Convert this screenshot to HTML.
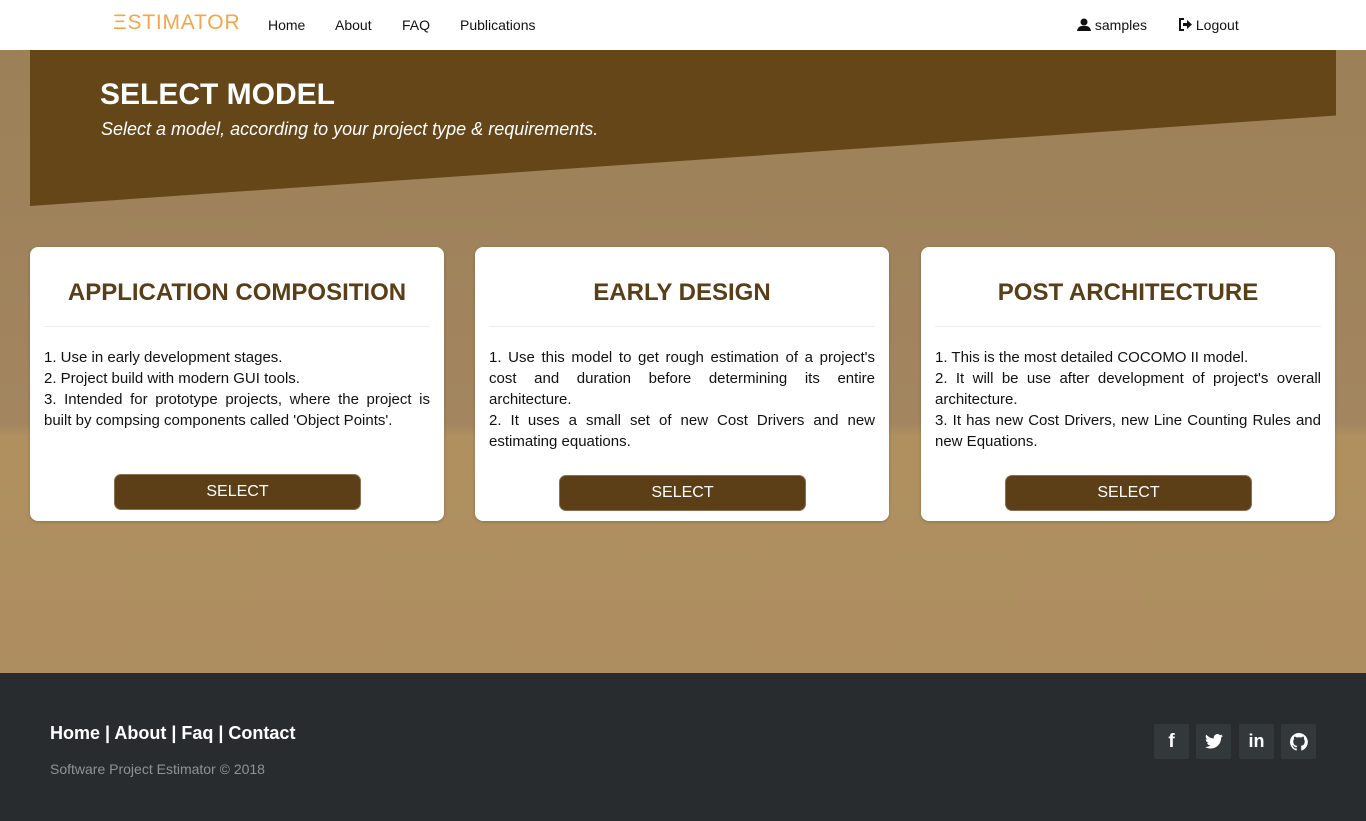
<!DOCTYPE html>
<html><head><meta charset="utf-8"><style>
*{box-sizing:border-box;margin:0;padding:0}
body{width:1366px;height:821px;overflow:hidden;font-family:"Liberation Sans",Arial,sans-serif;position:relative;background:#292c2f}
.nav{position:absolute;top:0;left:0;width:1366px;height:50px;background:#fff;font-size:14px;color:#111}
.nav span{position:absolute;top:17px}
.logo{position:absolute;left:113px;top:11px;font-size:21px;color:#f5a54a;letter-spacing:0.8px;font-weight:300}
.bg{position:absolute;top:50px;left:0;width:1366px;height:623px;background:linear-gradient(180deg,#9c8057 0%,#a38660 60%,#b0905f 62%,#ad8e60 100%)}
.banner{position:absolute;top:50px;left:30px;width:1306px;height:156px;background:#654619;clip-path:polygon(0 0,100% 0,100% 42%,0 100%)}
h1{position:absolute;left:100px;top:78px;color:#fff;font-size:30px;font-weight:bold}
.sub{position:absolute;left:101px;top:119px;color:#fff;font-size:18px;font-style:italic}
.card{position:absolute;top:247px;width:414px;height:274px;background:#fff;border-radius:8px;box-shadow:0 1px 3px rgba(0,0,0,.2)}
.card h2{position:absolute;top:32px;left:0;width:100%;text-align:center;color:#5a3e17;font-size:24px;font-weight:bold}
.card hr{position:absolute;top:79px;left:14px;right:14px;border:0;border-top:1px solid #eee}
.card p{position:absolute;top:100px;left:14px;right:14px;font-size:15px;line-height:21px;color:#111;text-align:justify}
.btn{position:absolute;left:84px;top:228px;width:247px;height:36px;background:#5c3f17;border-radius:7px;color:#fff;font-size:16px;text-align:center;line-height:34px;border:1px solid #8a7050}
.foot{position:absolute;top:673px;left:0;width:1366px;height:148px;background:#292c2f}
.fl{position:absolute;left:50px;top:50px;color:#fff;font-weight:bold;font-size:18px}
.fc{position:absolute;left:50px;top:88px;color:#8f9296;font-size:14px}
.ic{position:absolute;top:51px;width:35px;height:35px;background:#33383b;border-radius:2px;display:flex;align-items:center;justify-content:center;color:#fff;font-weight:bold;font-size:19px}
</style></head><body>
<div class="nav">
<div class="logo">ΞSTIMATOR</div>
<span style="left:268px">Home</span><span style="left:335px">About</span><span style="left:402px">FAQ</span><span style="left:460px">Publications</span>
<span style="left:1077px"><svg width="14" height="13" viewBox="0 0 14 13" style="vertical-align:-1px"><circle cx="7" cy="4" r="3.5" fill="#111"/><path d="M0 13 Q1 7 7 8 Q13 7 14 13Z" fill="#111"/></svg> samples</span>
<span style="left:1178px"><svg width="14" height="13" viewBox="0 0 14 13" style="vertical-align:-1px"><path d="M6 1H2V12H6" stroke="#111" stroke-width="2" fill="none"/><path d="M5 5H9V2L14 6.5 9 11V8H5Z" fill="#111"/></svg> Logout</span>
</div>
<div class="bg"></div>
<div class="banner"></div>
<h1>SELECT MODEL</h1>
<div class="sub">Select a model, according to your project type &amp; requirements.</div>
<div class="card" style="left:30px"><h2>APPLICATION COMPOSITION</h2><hr><p>1. Use in early development stages.<br>2. Project build with modern GUI tools.<br>3. Intended for prototype projects, where the project is built by compsing components called 'Object Points'.</p><div class="btn" style="top:227px">SELECT</div></div>
<div class="card" style="left:475px"><h2>EARLY DESIGN</h2><hr><p>1. Use this model to get rough estimation of a project's cost and duration before determining its entire architecture.<br>2. It uses a small set of new Cost Drivers and new estimating equations.</p><div class="btn">SELECT</div></div>
<div class="card" style="left:921px"><h2>POST ARCHITECTURE</h2><hr><p>1. This is the most detailed COCOMO II model.<br>2. It will be use after development of project's overall architecture.<br>3. It has new Cost Drivers, new Line Counting Rules and new Equations.</p><div class="btn">SELECT</div></div>
<div class="foot">
<div class="fl">Home | About | Faq | Contact</div>
<div class="fc">Software Project Estimator © 2018</div>
<div class="ic" style="left:1154px">f</div>
<div class="ic" style="left:1196px"><svg width="18" height="15" viewBox="0 0 24 20"><path d="M24 2.4a10 10 0 0 1-2.8.8A5 5 0 0 0 23.3.5a10 10 0 0 1-3.1 1.2A4.9 4.9 0 0 0 11.8 6 14 14 0 0 1 1.7.9a4.9 4.9 0 0 0 1.5 6.6A5 5 0 0 1 1 6.9a4.9 4.9 0 0 0 3.9 4.8 5 5 0 0 1-2.2.1 4.9 4.9 0 0 0 4.6 3.4A9.9 9.9 0 0 1 0 17.2 14 14 0 0 0 7.5 19.4c9 0 14-7.5 14-14v-.6A10 10 0 0 0 24 2.4z" fill="#fff"/></svg></div>
<div class="ic" style="left:1239px;font-size:18px">in</div>
<div class="ic" style="left:1281px"><svg width="18" height="18" viewBox="0 0 16 16"><path fill="#fff" d="M8 0a8 8 0 0 0-2.5 15.6c.4 0 .5-.2.5-.4v-1.5c-2.2.5-2.7-1-2.7-1-.4-.9-.9-1.2-.9-1.2-.7-.5.1-.5.1-.5.8.1 1.2.8 1.2.8.7 1.3 1.9.9 2.3.7.1-.5.3-.9.5-1.1-1.8-.2-3.6-.9-3.6-4 0-.9.3-1.6.8-2.1-.1-.2-.4-1 .1-2.1 0 0 .7-.2 2.2.8a7.5 7.5 0 0 1 4 0c1.5-1 2.2-.8 2.2-.8.4 1.1.2 1.9.1 2.1.5.6.8 1.3.8 2.1 0 3.1-1.9 3.8-3.6 4 .3.3.5.8.5 1.5v2.2c0 .2.1.5.6.4A8 8 0 0 0 8 0z"/></svg></div>
</div>
</body></html>
